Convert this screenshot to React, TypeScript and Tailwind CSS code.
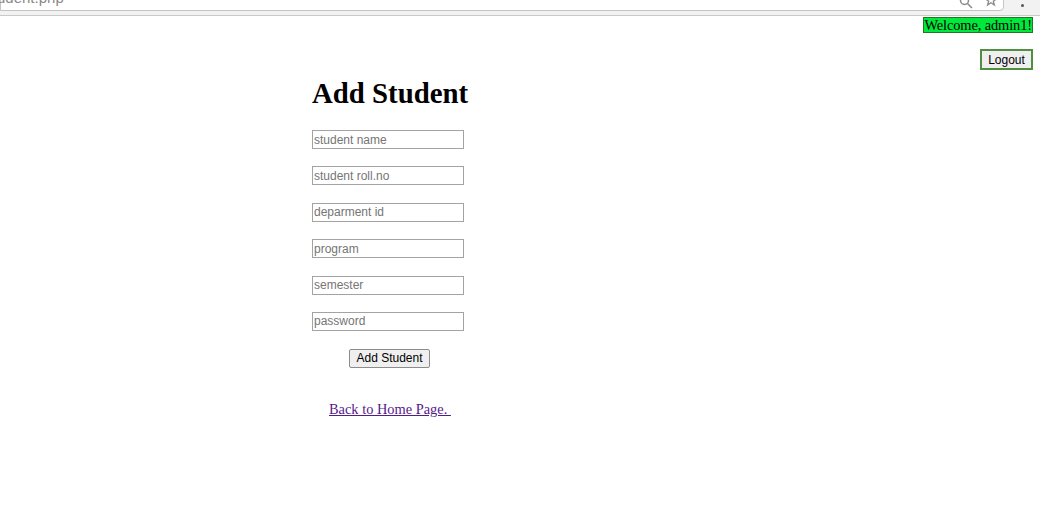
export default function App() {
  const fields = ["student name", "student roll.no", "deparment id", "program", "semester", "password"];

  return (
    <div className="min-h-screen bg-white text-black" style={{ fontFamily: '"Liberation Serif", serif' }}>
      {/* browser chrome strip, cut off at the top */}
      <div className="relative flex h-[16px] items-start overflow-hidden border-b border-[#c9c9c9] bg-[#f2f2f2]">
        <div className="relative -mt-[14px] flex h-[25px] w-[1004px] items-center rounded-br-[4px] border border-[#c4c4c4] bg-white">
          <span
            className="absolute -left-[4px] top-[3px] text-[15px] leading-none text-[#8a8a8a]"
            style={{ fontFamily: '"Liberation Sans", sans-serif' }}
          >
            udent.php
          </span>
          <svg className="absolute left-[958px] top-[8px]" width="14" height="14" viewBox="0 0 14 14" fill="none" stroke="#8a8a8a" strokeWidth="1.5">
            <circle cx="5.5" cy="5.5" r="4" />
            <path d="M8.5 8.5 13 13" />
          </svg>
          <svg className="absolute left-[983px] top-[7px]" width="14" height="14" viewBox="0 0 14 14" fill="none" stroke="#8a8a8a" strokeWidth="1.3">
            <path d="M7 1.5 8.6 5h3.7l-3 2.3 1.1 3.7L7 8.8 3.6 11l1.1-3.7-3-2.3h3.7z" />
          </svg>
        </div>
        <div className="absolute left-[1021px] top-[4px] h-[3px] w-[3px] rounded-full bg-[#555]" />
      </div>

      <div className="flex flex-col items-end pr-[7px]">
        <div className="mt-[1px] h-[16px] border border-[#1f7a1f] bg-[#00e83c] px-0 text-[14.4px] leading-[14px] tracking-[-0.1px]">
          Welcome, admin1!
        </div>
        <button
          className="mt-[16px] h-[21px] w-[53px] border-2 border-[#4f8f3f] bg-[#efefef] text-[12px] leading-none text-black"
          style={{ fontFamily: '"Liberation Sans", sans-serif' }}
        >
          Logout
        </button>
      </div>

      <div className="ml-[30%] flex flex-col items-start">
        <h1 className="mt-[7px] text-[28.8px] font-bold leading-[33px]">Add Student</h1>
        <div className="mt-[20px] flex flex-col gap-[17.4px]">
          {fields.map((f) => (
            <input
              key={f}
              type={f === "password" ? "password" : "text"}
              placeholder={f}
              className="h-[19px] w-[152px] border border-[#a3a3a3] bg-white px-[1px] text-[12px] text-black placeholder:text-[#757575] outline-none"
              style={{ fontFamily: '"Liberation Sans", sans-serif' }}
            />
          ))}
        </div>
        <button
          className="ml-[37px] mt-[18px] h-[19px] w-[81px] rounded-[2px] border border-[#8c8c8c] bg-[#efefef] text-[12px] leading-none text-black"
          style={{ fontFamily: '"Liberation Sans", sans-serif' }}
        >
          Add Student
        </button>
        <a href="#" className="ml-[17px] mt-[33px] text-[14.4px] leading-[16.5px] text-[#551a8b] underline">
          Back to Home Page.&nbsp;
        </a>
      </div>
    </div>
  );
}
